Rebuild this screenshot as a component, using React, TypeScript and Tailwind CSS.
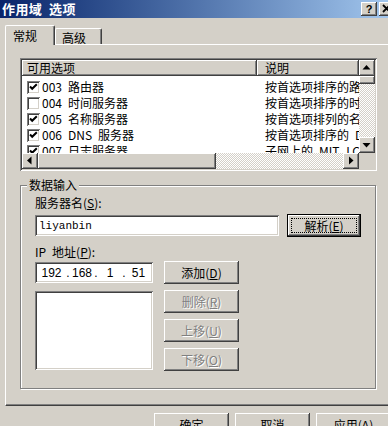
import React from "react";

const RAISED =
  "shadow-[inset_-1px_-1px_0_#404040,inset_1px_1px_0_#ffffff,inset_-2px_-2px_0_#808080,inset_2px_2px_0_#d4d0c8]";
const SUNKEN =
  "shadow-[inset_1px_1px_0_#808080,inset_-1px_-1px_0_#ffffff,inset_2px_2px_0_#404040,inset_-2px_-2px_0_#d4d0c8]";
const DITHER =
  "bg-[repeating-conic-gradient(#ffffff_0_25%,#d4d0c8_0_50%)] bg-[length:2px_2px]";

function Arrow({ dir }: { dir: "up" | "down" | "left" | "right" }) {
  const pts =
    dir === "up"
      ? "7.5,5 11.5,9.5 3.5,9.5"
      : dir === "down"
      ? "3.5,6 11.5,6 7.5,10.5"
      : dir === "left"
      ? "9.5,3.5 9.5,11.5 5,7.5"
      : "6,3.5 6,11.5 10.5,7.5";
  return (
    <div className={`w-[16px] h-[16px] shrink-0 bg-[#d4d0c8] ${RAISED}`}>
      <svg width="16" height="16" viewBox="0 0 16 16">
        <polygon points={pts} fill="#000" />
      </svg>
    </div>
  );
}

function Check({ checked }: { checked: boolean }) {
  return (
    <div className={`w-[13px] h-[13px] shrink-0 bg-white ${SUNKEN}`}>
      {checked && (
        <svg width="13" height="13" viewBox="0 0 13 13">
          <polyline points="3,5.5 5.2,7.8 9.8,3.2" fill="none" stroke="#000" strokeWidth="2" />
        </svg>
      )}
    </div>
  );
}

function Btn({
  children,
  className = "",
  disabled = false,
  isDefault = false,
}: {
  children: React.ReactNode;
  className?: string;
  disabled?: boolean;
  isDefault?: boolean;
}) {
  const text = disabled ? "text-[#808080] [text-shadow:1px_1px_0_#ffffff]" : "text-black";
  if (isDefault) {
    return (
      <div className={`border border-black bg-[#d4d0c8] ${className}`}>
        <div className={`w-full h-full relative flex items-center justify-center ${RAISED} ${text}`}>
          <div className="absolute inset-[3px] border border-dotted border-black" />
          <span className="leading-[14px]">{children}</span>
        </div>
      </div>
    );
  }
  return (
    <div className={`bg-[#d4d0c8] flex items-center justify-center ${RAISED} ${text} ${className}`}>
      <span className="leading-[14px]">{children}</span>
    </div>
  );
}

const rows = [
  { c: true, name: "003\u2002路由器", desc: "按首选项排序的路由器 IP 地址阵列" },
  { c: false, name: "004\u2002时间服务器", desc: "按首选项排序的时间服务器阵列" },
  { c: true, name: "005\u2002名称服务器", desc: "按首选项排列的名称服务器阵列" },
  { c: true, name: "006\u2002DNS\u2002服务器", desc: "按首选项排序的\u2002DNS 服务器阵列" },
  { c: true, name: "007\u2002日志服务器", desc: "子网上的\u2002MIT_LCS UDP 日志服务器" },
];

export default function App() {
  return (
    <div className="w-[388px] h-[426px] overflow-hidden bg-[#d4d0c8] font-['Noto_Sans_CJK_SC',sans-serif] text-[12px] text-black">
      <div className="w-[397px] flex flex-col">
        {/* Title bar */}
        <div className="h-[18px] flex items-center pl-[2px] pr-[2px] bg-linear-to-r from-[#0a246a] to-[#a6caf0]">
          <span className="text-white font-bold text-[13px] leading-[18px] tracking-[0.4px]">作用域&#x2002;选项</span>
          <div className="ml-auto flex gap-[2px]">
            <div className={`w-[16px] h-[14px] bg-[#d4d0c8] ${RAISED} flex items-center justify-center`}>
              <span className="font-['Liberation_Sans',sans-serif] font-bold text-[11px] leading-none">?</span>
            </div>
            <div className={`w-[16px] h-[14px] bg-[#d4d0c8] ${RAISED}`}>
              <svg width="16" height="14" viewBox="0 0 16 14">
                <path d="M4 3 L11 10 M11 3 L4 10" stroke="#000" strokeWidth="1.8" />
              </svg>
            </div>
          </div>
        </div>

        {/* Tabs */}
        <div className="flex items-end pl-[5px] pt-[7px]">
          <div className="relative z-10 -mb-px w-[50px] h-[20px] bg-[#d4d0c8] border-l border-t border-white border-r border-r-[#404040] rounded-t-[2px] shadow-[inset_-1px_0_0_#808080] pl-[7px] pt-[1px]">
            <span className="leading-[14px] text-[12px]">常规</span>
          </div>
          <div className="w-[47px] h-[16px] bg-[#d4d0c8] border-l border-t border-white border-r border-r-[#404040] rounded-t-[2px] shadow-[inset_-1px_0_0_#808080] pl-[6px]">
            <span className="leading-[15px] text-[12px]">高级</span>
          </div>
        </div>

        {/* Panel */}
        <div className="ml-[5px] w-[387px] h-[362px] border-t border-l border-white border-b border-b-[#404040] border-r border-r-[#404040] shadow-[inset_0_-1px_0_#808080,inset_-1px_0_0_#808080] pt-[13px] pl-[14px]">
          {/* List view */}
          <div className={`w-[357px] h-[113px] p-[2px] bg-white ${SUNKEN}`}>
            <div className="flex w-full h-full">
              <div className="w-[337px] flex flex-col">
                <div className="h-[16px] flex shrink-0">
                  <div className={`w-[235px] h-[16px] bg-[#d4d0c8] ${RAISED} pl-[5px] leading-[15px]`}>可用选项</div>
                  <div className={`w-[102px] h-[16px] bg-[#d4d0c8] ${RAISED} pl-[8px] leading-[15px]`}>说明</div>
                </div>
                <div className="flex-1 overflow-hidden bg-white pt-[3px]">
                  {rows.map((r, i) => (
                    <div key={i} className="h-[16px] flex items-center">
                      <div className="w-[235px] shrink-0 flex items-center gap-[2px] pl-[5px]">
                        <Check checked={r.c} />
                        <span className="leading-[16px] whitespace-nowrap">{r.name}</span>
                      </div>
                      <div className="flex-1 overflow-hidden whitespace-nowrap pl-[8px] leading-[16px]">{r.desc}</div>
                    </div>
                  ))}
                </div>
                <div className="h-[16px] flex shrink-0">
                  <Arrow dir="left" />
                  <div className={`w-[178px] h-[16px] bg-[#d4d0c8] ${RAISED}`} />
                  <div className={`flex-1 h-[16px] ${DITHER}`} />
                  <Arrow dir="right" />
                </div>
              </div>
              <div className="w-[16px] flex flex-col">
                <Arrow dir="up" />
                <div className={`h-[8px] w-[16px] bg-[#d4d0c8] ${RAISED}`} />
                <div className={`flex-1 w-[16px] ${DITHER}`} />
                <Arrow dir="down" />
                <div className="h-[16px] w-[16px] bg-[#d4d0c8]" />
              </div>
            </div>
          </div>

          {/* Group box */}
          <div className="relative mt-[14px] w-[356px] h-[204px] border border-[#808080] shadow-[inset_1px_1px_0_#ffffff,1px_1px_0_#ffffff]">
            <div className="absolute left-[6px] -top-[8px] px-[2px] bg-[#d4d0c8] leading-[14px]">数据输入</div>
            <div className="pl-[14px] pt-[10px] flex flex-col">
              <div className="leading-[14px]">
                服务器名(<u>S</u>):
              </div>
              <div className="mt-[4px] flex items-start">
                <div className={`mt-[1px] w-[244px] h-[21px] bg-white ${SUNKEN} pl-[4px] flex items-center`}>
                  <span className="font-['Liberation_Mono',monospace] text-[11px] leading-[14px]">liyanbin</span>
                </div>
                <Btn isDefault className="ml-[8px] w-[74px] h-[23px]">
                  解析(<u>E</u>)
                </Btn>
              </div>
              <div className="mt-[8px] leading-[14px]">
                IP&#x2002;地址(<u>P</u>):
              </div>
              <div className="mt-[2px] flex items-start">
                <div className="flex flex-col">
                  <div className={`mt-[1px] w-[118px] h-[21px] bg-white ${SUNKEN} px-[2px] flex items-center font-['Liberation_Sans',sans-serif] text-[12px]`}>
                    <span className="w-[29px] text-center leading-[14px]">192</span>
                    <span className="w-[4px] text-center leading-[14px]">.</span>
                    <span className="w-[24px] text-center leading-[14px]">168</span>
                    <span className="w-[4px] text-center leading-[14px]">.</span>
                    <span className="w-[24px] text-center leading-[14px]">1</span>
                    <span className="w-[4px] text-center leading-[14px]">.</span>
                    <span className="w-[25px] text-center leading-[14px]">51</span>
                  </div>
                  <div className={`mt-[8px] w-[118px] h-[79px] bg-white ${SUNKEN}`} />
                </div>
                <div className="ml-[11px] flex flex-col gap-[6px]">
                  <Btn className="w-[75px] h-[23px]">
                    添加(<u>D</u>)
                  </Btn>
                  <Btn disabled className="w-[75px] h-[23px]">
                    删除(<u>R</u>)
                  </Btn>
                  <Btn disabled className="w-[75px] h-[23px]">
                    上移(<u>U</u>)
                  </Btn>
                  <Btn disabled className="w-[75px] h-[23px]">
                    下移(<u>O</u>)
                  </Btn>
                </div>
              </div>
            </div>
          </div>
        </div>

        {/* Bottom buttons */}
        <div className="mt-[7px] flex justify-end gap-[6px] pr-[6px]">
          <Btn className="w-[75px] h-[23px]">确定</Btn>
          <Btn className="w-[75px] h-[23px]">取消</Btn>
          <Btn className="w-[75px] h-[23px]">
            应用(<u>A</u>)
          </Btn>
        </div>
      </div>
    </div>
  );
}
